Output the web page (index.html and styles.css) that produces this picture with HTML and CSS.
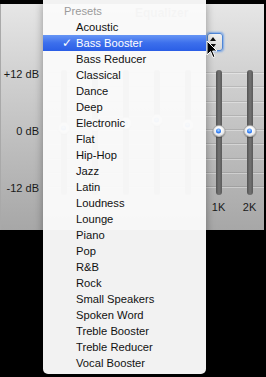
FILE: index.html
```html
<!DOCTYPE html>
<html lang="en">

<head>
    <meta charset="UTF-8">
    <meta name="viewport" content="width=device-width, initial-scale=1.0">
    <title>Equalizer Presets</title>
    <link rel="stylesheet" href="styles.css">
</head>

<body>
    <div class="screen">
        <section class="eq-window">
            <header class="eq-head">
                <h1 class="eq-title">Equalizer</h1>
                <div class="eq-toolbar">
                    <button class="stepper" aria-label="Presets">
                        <span class="arrow-up"></span>
                        <span class="arrow-down"></span>
                    </button>
                </div>
            </header>

            <div class="eq-body">
                <div class="scale">
                    <span>+12 dB</span>
                    <span>0 dB</span>
                    <span>-12 dB</span>
                </div>

                <!-- the first bands sit under the open menu, so their labels are left out -->
                <div class="bands">
                    <div class="band">
                        <div class="track"><span class="knob" style="top: 46%"></span></div>
                    </div>
                    <div class="band">
                        <div class="track"><span class="knob" style="top: 44%"></span></div>
                    </div>
                    <div class="band">
                        <div class="track"><span class="knob" style="top: 42%"></span></div>
                    </div>
                    <div class="band">
                        <div class="track"><span class="knob" style="top: 40%"></span></div>
                    </div>
                    <div class="band">
                        <div class="track"><span class="knob" style="top: 44%"></span></div>
                    </div>
                    <div class="band">
                        <div class="track"><span class="knob" style="top: 49%"></span></div>
                        <span class="band-label">1K</span>
                    </div>
                    <div class="band">
                        <div class="track"><span class="knob" style="top: 49%"></span></div>
                        <span class="band-label">2K</span>
                    </div>
                </div>
            </div>
        </section>

        <ul class="preset-menu">
            <li class="menu-heading">Presets</li>
            <li>Acoustic</li>
            <li class="selected">Bass Booster</li>
            <li>Bass Reducer</li>
            <li>Classical</li>
            <li>Dance</li>
            <li>Deep</li>
            <li>Electronic</li>
            <li>Flat</li>
            <li>Hip-Hop</li>
            <li>Jazz</li>
            <li>Latin</li>
            <li>Loudness</li>
            <li>Lounge</li>
            <li>Piano</li>
            <li>Pop</li>
            <li>R&amp;B</li>
            <li>Rock</li>
            <li>Small Speakers</li>
            <li>Spoken Word</li>
            <li>Treble Booster</li>
            <li>Treble Reducer</li>
            <li>Vocal Booster</li>
        </ul>

        <!-- mouse pointer over the popup stepper -->
        <svg class="cursor" width="12" height="19" viewBox="0 0 12 19">
            <path d="M1 1 L1 15 L4.5 11.5 L7 17.5 L9 16.6 L6.6 11 L11 11 Z" fill="#000" stroke="#fff" stroke-width="1" stroke-linejoin="round" />
        </svg>
    </div>
</body>

</html>
```

FILE: styles.css
```css
* {
    margin: 0;
    padding: 0;
    box-sizing: border-box;
    font-family: 'Liberation Sans', Arial, sans-serif;
}

body {
    background-color: #000;
    width: 266px;
    height: 377px;
    overflow: hidden;
}

.screen {
    position: relative;
    width: 266px;
    height: 377px;
    padding-top: 4px;
}

.eq-window {
    width: 264px;
    height: 226px;
    overflow: hidden;
    background: linear-gradient(#e6e6e6, #d2d2d2 30%, #b9b9b9 70%, #a7a7a7);
    border-left: 1px solid #a9a9a9;
}

.eq-head {
    height: 58px;
    display: flex;
    flex-direction: column;
}

.eq-title {
    font-size: 12px;
    font-weight: bold;
    line-height: 18px;
    color: #555;
    padding-left: 134px;
}

.eq-toolbar {
    display: flex;
    justify-content: flex-end;
    margin-top: 11px;
    padding-right: 41px;
}

.stepper {
    width: 16px;
    height: 18px;
    display: flex;
    flex-direction: column;
    align-items: center;
    justify-content: center;
    gap: 3px;
    padding-right: 4px;
    border: 1px solid #4f86d6;
    border-radius: 3px;
    background: linear-gradient(#f2f2f2, #d6d6d6);
    box-shadow: 0 0 2px 1px rgba(90, 150, 235, 0.75);
}

.arrow-up,
.arrow-down {
    width: 0;
    height: 0;
    border-left: 3px solid transparent;
    border-right: 3px solid transparent;
}

.arrow-up {
    border-bottom: 4px solid #111;
}

.arrow-down {
    border-top: 4px solid #111;
}

.eq-body {
    display: flex;
}

.scale {
    width: 47px;
    flex-shrink: 0;
    display: flex;
    flex-direction: column;
    align-items: flex-end;
    gap: 44px;
    padding-top: 6px;
    padding-right: 9px;
    font-size: 11px;
    line-height: 13px;
    color: #1a1a1a;
}

.bands {
    display: flex;
    flex-shrink: 0;
    background-image: repeating-linear-gradient(to bottom,
            transparent 0 10px,
            rgba(0, 0, 0, 0.1) 10px 11px,
            rgba(255, 255, 255, 0.35) 11px 12px,
            transparent 12px 14.3px);
    background-size: 100% 130px;
    background-repeat: no-repeat;
}

.band {
    width: 31px;
    flex-shrink: 0;
    display: flex;
    flex-direction: column;
    align-items: center;
}

.track {
    position: relative;
    width: 6px;
    height: 125px;
    margin-top: 8px;
    border-radius: 3px;
    background: linear-gradient(90deg, #535353, #737373 50%, #5a5a5a);
}

.knob {
    position: absolute;
    left: 50%;
    width: 13px;
    height: 12px;
    transform: translate(-50%, -50%);
    border-radius: 50%;
    border: 1px solid rgba(0, 0, 0, 0.25);
    background: radial-gradient(circle at 50% 40%, #fff 30%, #dcdcdc 80%, #c4c4c4);
    box-shadow: 0 1px 1px rgba(0, 0, 0, 0.3);
}

.knob::after {
    content: "";
    position: absolute;
    left: 50%;
    top: 50%;
    width: 5px;
    height: 5px;
    transform: translate(-50%, -50%);
    border-radius: 50%;
    background: radial-gradient(circle at 50% 35%, #a9d3ff, #2f7cf4 60%, #1458d8);
}

.band-label {
    margin-top: 6px;
    font-size: 11px;
    line-height: 13px;
    color: #1a1a1a;
}

.preset-menu {
    position: absolute;
    left: 43px;
    top: 0;
    width: 163px;
    padding: 3px 0;
    list-style: none;
    background-color: rgba(250, 250, 250, 0.97);
    border-radius: 0 0 5px 5px;
    box-shadow: 0 3px 8px rgba(0, 0, 0, 0.35);
}

.preset-menu li {
    height: 16px;
    line-height: 16px;
    padding-left: 33px;
    font-size: 11.2px;
    color: #111;
    white-space: nowrap;
}

.preset-menu .menu-heading {
    padding-left: 21px;
    color: #9b9b9b;
}

.preset-menu .selected {
    color: #fff;
    background: linear-gradient(#6796f5, #3c6fec 50%, #2a5ee6);
}

.preset-menu .selected::before {
    content: "✓";
    display: inline-block;
    width: 14px;
    margin-left: -14px;
    font-family: 'DejaVu Sans', sans-serif;
    font-size: 12px;
    font-weight: bold;
}

.cursor {
    position: absolute;
    left: 206px;
    top: 40px;
}
```
